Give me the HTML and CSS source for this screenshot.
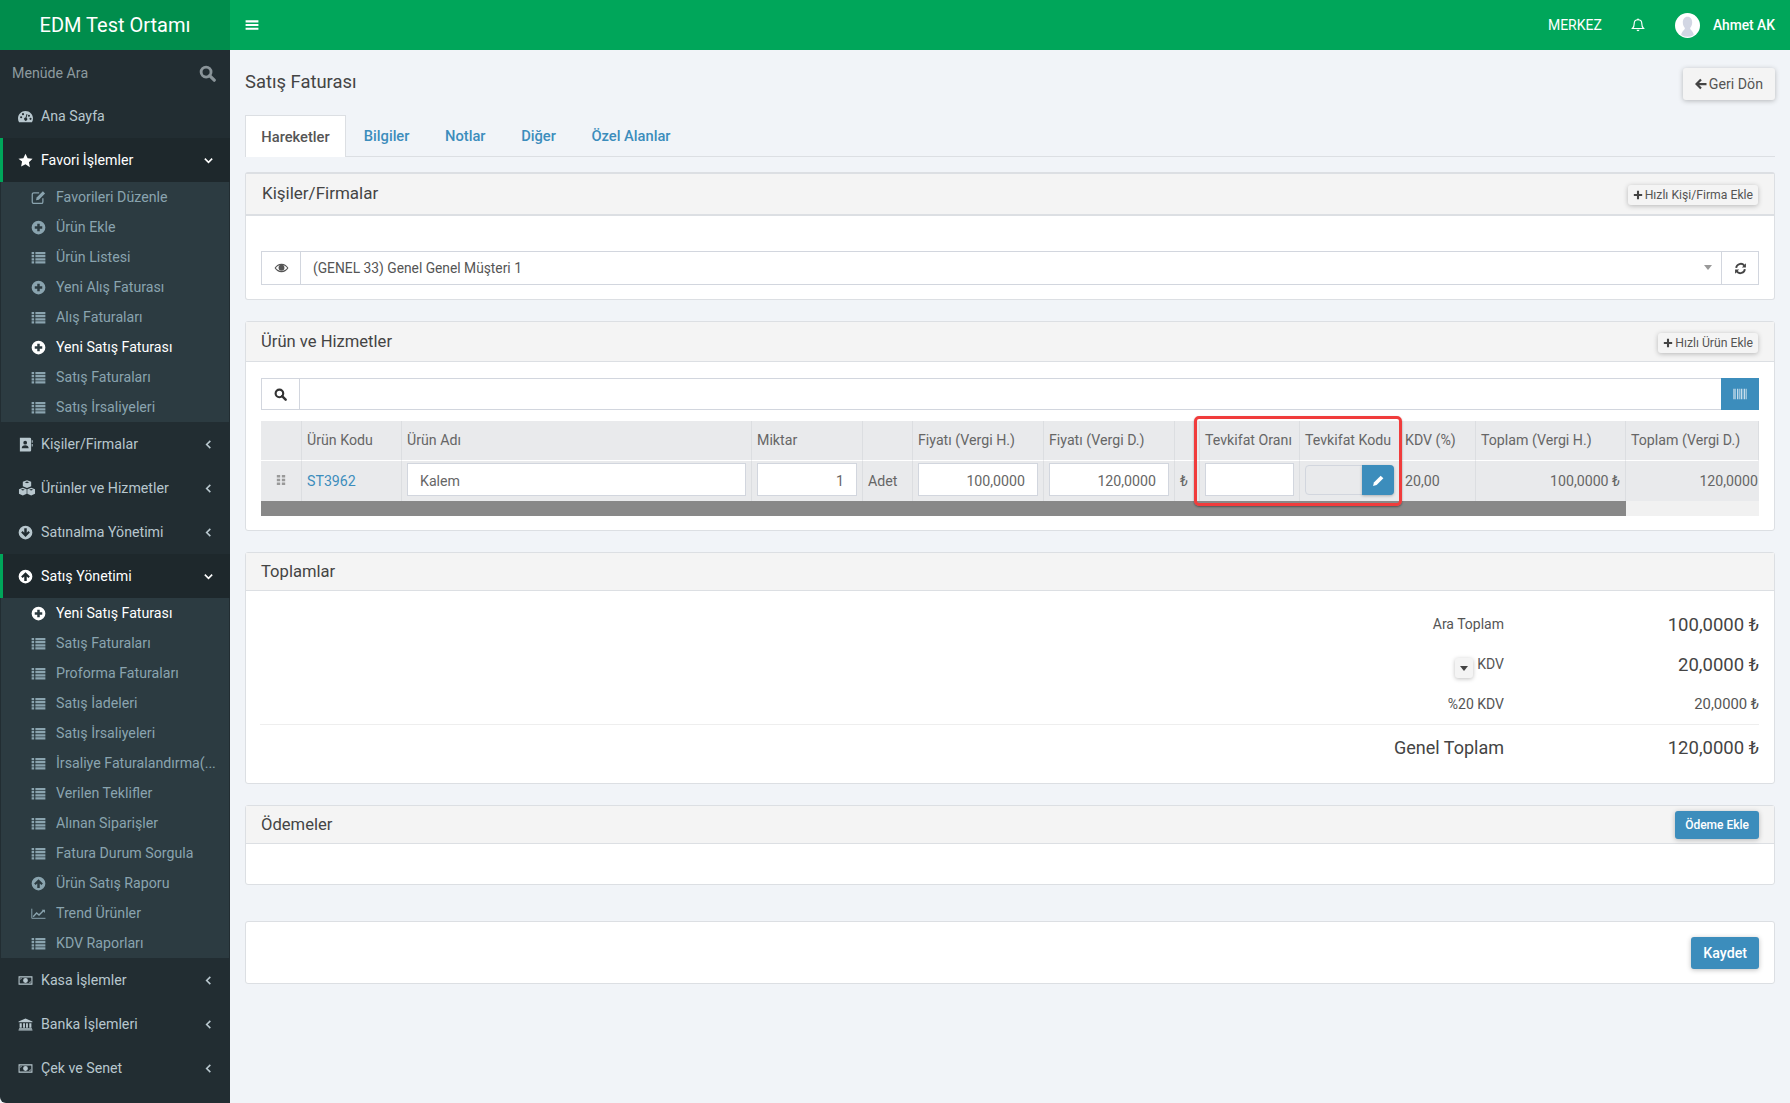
FILE: index.html
```html
<!DOCTYPE html>
<html lang="tr">
<head>
<meta charset="utf-8">
<title>EDM Test Ortamı</title>
<link rel="stylesheet" href="styles.css">
</head>
<body>
<svg class="defs" width="0" height="0">
	<symbol id="i-search" viewBox="0 0 24 24"><circle cx="10" cy="10" r="7" fill="none" stroke="currentColor" stroke-width="4"/><path d="M15 15l6.500 6.500" stroke="currentColor" stroke-width="4.500" stroke-linecap="round"/></symbol>
	<symbol id="i-bars" viewBox="0 0 24 24"><path d="M1 4h22v3.500H1zM1 10.300h22v3.500H1zM1 16.600h22v3.500H1z" fill="currentColor"/></symbol>
	<symbol id="i-dash" viewBox="0 0 24 24"><path fill-rule="evenodd" fill="currentColor" d="M12 3C5.400 3 0 8.400 0 15c0 2.300.6 4.200 1.700 6h20.600C23.400 19.200 24 17.300 24 15c0-6.600-5.400-12-12-12zM5 11.500a1.700 1.700 0 1 1 0 3.400a1.700 1.700 0 0 1 0-3.400zM8 6.500a1.700 1.700 0 1 1 0 3.400a1.700 1.700 0 0 1 0-3.400zM13.700 8l1.400.5L13.600 14a2.500 2.500 0 1 1-1.500-.3zM17.500 9a1.700 1.700 0 1 1 0 3.400a1.700 1.700 0 0 1 0-3.400zM20 14a1.700 1.700 0 1 1 0 3.400a1.700 1.700 0 0 1 0-3.400z"/></symbol>
	<symbol id="i-star" viewBox="0 0 24 24"><path fill="currentColor" d="M12 1l3.400 7.300 7.900 1-5.800 5.400 1.500 7.900L12 17.800l-7 3.800 1.500-7.900L.7 9.300l7.900-1z"/></symbol>
	<symbol id="i-down" viewBox="0 0 24 24"><path d="M4 8l8 8 8-8" fill="none" stroke="currentColor" stroke-width="3.500"/></symbol>
	<symbol id="i-left" viewBox="0 0 24 24"><path d="M16 4l-8 8 8 8" fill="none" stroke="currentColor" stroke-width="3.500"/></symbol>
	<symbol id="i-edit" viewBox="0 0 24 24"><path d="M19 13v6a2.500 2.500 0 0 1-2.500 2.500h-12A2.500 2.500 0 0 1 2 19V7a2.500 2.500 0 0 1 2.500-2.500H13" fill="none" stroke="currentColor" stroke-width="2"/><path d="M9 12L19 2l3.500 3.500-10 10L8 16.500z" fill="currentColor"/></symbol>
	<symbol id="i-plus-c" viewBox="0 0 24 24"><path fill-rule="evenodd" fill="currentColor" d="M12 1a11 11 0 1 0 0 22a11 11 0 0 0 0-22zM10 6h4v4h4v4h-4v4h-4v-4H6v-4h4z"/></symbol>
	<symbol id="i-up-c" viewBox="0 0 24 24"><path fill-rule="evenodd" fill="currentColor" d="M12 1a11 11 0 1 0 0 22a11 11 0 0 0 0-22zM12 5l7 7-2.400 2.400-2.600-2.600V19h-4v-7.200l-2.600 2.600L5 12z"/></symbol>
	<symbol id="i-down-c" viewBox="0 0 24 24"><path fill-rule="evenodd" fill="currentColor" d="M12 1a11 11 0 1 0 0 22a11 11 0 0 0 0-22zM12 19l-7-7 2.400-2.400L10 12.200V5h4v7.200l2.600-2.600L19 12z"/></symbol>
	<symbol id="i-list" viewBox="0 0 24 24"><path fill="currentColor" d="M1 3h4v3.600H1zM7 3h16v3.600H7zM1 8h4v3.600H1zM7 8h16v3.600H7zM1 13h4v3.600H1zM7 13h16v3.600H7zM1 18h4v3.600H1zM7 18h16v3.600H7z"/></symbol>
	<symbol id="i-book" viewBox="0 0 24 24"><path fill-rule="evenodd" fill="currentColor" d="M3 1h16a2 2 0 0 1 2 2v18a2 2 0 0 1-2 2H3zM11.500 6a3 3 0 1 0 0 6a3 3 0 0 0 0-6zM6 18h11c0-3-2-5-5.500-5S6 15 6 18z"/><path fill="currentColor" d="M22 5h1.500v4H22zM22 11h1.500v4H22z"/></symbol>
	<symbol id="i-cubes" viewBox="0 0 28 24"><path fill-rule="evenodd" fill="currentColor" d="M14 0l6.500 2.400v7L14 12l-6.500-2.600v-7zM14 2l-3.500 1.200L14 4.500l3.500-1.300zM7.500 11.500l6 2.300v7l-6 2.700-6-2.700v-7zM7.500 13.500L4.500 14.600l3 1.100 3-1.100zM20.500 11.500l6 2.300v7l-6 2.700-6-2.700v-7zM20.500 13.500l-3 1.100 3 1.100 3-1.100z"/></symbol>
	<symbol id="i-chart" viewBox="0 0 28 24"><path d="M1.500 3v18H27" fill="none" stroke="currentColor" stroke-width="1.800"/><path d="M4 18l6.500-7 4.500 4 8-8" fill="none" stroke="currentColor" stroke-width="2.600"/><path d="M20 5h6v6z" fill="currentColor"/></symbol>
	<symbol id="i-money" viewBox="0 0 28 24"><path fill-rule="evenodd" fill="currentColor" d="M1 4h26v16H1zM3 6.500v11h22v-11zM14 7.500a4.500 4.500 0 1 0 0 9a4.500 4.500 0 0 0 0-9z"/><path fill="currentColor" d="M4.500 8h3l-3 3zM23.500 16h-3l3-3z"/></symbol>
	<symbol id="i-bank" viewBox="0 0 28 24"><path fill="currentColor" d="M14 1l13 5.500V8H1V6.500zM3 9.500h4V18H3zM9.500 9.500h3.500V18H9.500zM15 9.500h3.500V18H15zM21 9.500h4V18h-4zM2 19h24v1.800H2zM1 21.500h26V23H1z"/></symbol>
	<symbol id="i-bell" viewBox="0 0 24 24"><path d="M12 3c-4 0-6.500 3-6.500 6.500 0 5-1.500 7-3 8.500h19c-1.500-1.500-3-3.500-3-8.500C18.500 6 16 3 12 3z" fill="none" stroke="currentColor" stroke-width="2"/><path d="M9.500 20a2.500 2.500 0 0 0 5 0z" fill="currentColor"/><circle cx="12" cy="2.200" r="1.500" fill="currentColor"/></symbol>
	<symbol id="i-back" viewBox="0 0 24 24"><path d="M12 3L3 12l9 9M4 12h19" fill="none" stroke="currentColor" stroke-width="4.500"/></symbol>
	<symbol id="i-plus" viewBox="0 0 24 24"><path d="M9.500 2h5v7.500H22v5h-7.500V22h-5v-7.500H2v-5h7.500z" fill="currentColor"/></symbol>
	<symbol id="i-eye" viewBox="0 0 28 24"><path fill-rule="evenodd" fill="currentColor" d="M14 4C8 4 3.500 8 1 12c2.500 4 7 8 13 8s10.500-4 13-8c-2.500-4-7-8-13-8zM14 6.500C18 6.500 22.500 9 24.500 12c-2 3-6.500 5.500-10.500 5.500S5.500 15 3.500 12C5.500 9 10 6.500 14 6.500z"/><circle cx="14" cy="11.500" r="5.500" fill="currentColor"/></symbol>
	<symbol id="i-refresh" viewBox="0 0 24 24"><path d="M4 11a8.500 8.500 0 0 1 15-4.500M20 13a8.500 8.500 0 0 1-15 4.500" fill="none" stroke="currentColor" stroke-width="3.500"/><path d="M22 2.500V10h-7.500zM2 21.500V14h7.500z" fill="currentColor"/></symbol>
	<symbol id="i-pencil" viewBox="0 0 24 24"><path d="M2 22l1.500-6.500L16 3l5 5L8.500 20.500z" fill="currentColor"/></symbol>
	<symbol id="i-barcode" viewBox="0 0 24 24"><path fill="currentColor" opacity=".9" d="M2 4h2v16H2zM5 4h1v16H5zM7.500 4h2v16h-2zM11 4h1v16h-1zM13 4h2v16h-2zM16 4h1v16h-1zM18 4h1.500v16H18zM20.500 4H22v16h-1.500z"/></symbol>
	<symbol id="i-grip" viewBox="0 0 12 14"><path fill="currentColor" d="M1 1h4v3H1zM7 1h4v3H7zM1 5.500h4v3H1zM7 5.500h4v3H7zM1 10h4v3H1zM7 10h4v3H7z"/></symbol>
</svg>

<aside class="sidebar">
	<div class="logo">EDM Test Ortamı</div>
	<div class="menu-search"><span>Menüde Ara</span><svg class="ic-search"><use href="#i-search"/></svg></div>

	<a class="menu-item"><svg class="mi"><use href="#i-dash"/></svg>Ana Sayfa</a>

	<a class="menu-item open"><svg class="mi"><use href="#i-star"/></svg>Favori İşlemler<svg class="arrow"><use href="#i-down"/></svg></a>
	<div class="submenu">
		<a><svg class="si"><use href="#i-edit"/></svg>Favorileri Düzenle</a>
		<a><svg class="si"><use href="#i-plus-c"/></svg>Ürün Ekle</a>
		<a><svg class="si"><use href="#i-list"/></svg>Ürün Listesi</a>
		<a><svg class="si"><use href="#i-plus-c"/></svg>Yeni Alış Faturası</a>
		<a><svg class="si"><use href="#i-list"/></svg>Alış Faturaları</a>
		<a class="current"><svg class="si"><use href="#i-plus-c"/></svg>Yeni Satış Faturası</a>
		<a><svg class="si"><use href="#i-list"/></svg>Satış Faturaları</a>
		<a><svg class="si"><use href="#i-list"/></svg>Satış İrsaliyeleri</a>
	</div>

	<a class="menu-item"><svg class="mi"><use href="#i-book"/></svg>Kişiler/Firmalar<svg class="arrow"><use href="#i-left"/></svg></a>
	<a class="menu-item"><svg class="mi wide"><use href="#i-cubes"/></svg>Ürünler ve Hizmetler<svg class="arrow"><use href="#i-left"/></svg></a>
	<a class="menu-item"><svg class="mi"><use href="#i-down-c"/></svg>Satınalma Yönetimi<svg class="arrow"><use href="#i-left"/></svg></a>

	<a class="menu-item open"><svg class="mi"><use href="#i-up-c"/></svg>Satış Yönetimi<svg class="arrow"><use href="#i-down"/></svg></a>
	<div class="submenu">
		<a class="current"><svg class="si"><use href="#i-plus-c"/></svg>Yeni Satış Faturası</a>
		<a><svg class="si"><use href="#i-list"/></svg>Satış Faturaları</a>
		<a><svg class="si"><use href="#i-list"/></svg>Proforma Faturaları</a>
		<a><svg class="si"><use href="#i-list"/></svg>Satış İadeleri</a>
		<a><svg class="si"><use href="#i-list"/></svg>Satış İrsaliyeleri</a>
		<a><svg class="si"><use href="#i-list"/></svg>İrsaliye Faturalandırma(...</a>
		<a><svg class="si"><use href="#i-list"/></svg>Verilen Teklifler</a>
		<a><svg class="si"><use href="#i-list"/></svg>Alınan Siparişler</a>
		<a><svg class="si"><use href="#i-list"/></svg>Fatura Durum Sorgula</a>
		<a><svg class="si"><use href="#i-up-c"/></svg>Ürün Satış Raporu</a>
		<a><svg class="si"><use href="#i-chart"/></svg>Trend Ürünler</a>
		<a><svg class="si"><use href="#i-list"/></svg>KDV Raporları</a>
	</div>

	<a class="menu-item"><svg class="mi"><use href="#i-money"/></svg>Kasa İşlemler<svg class="arrow"><use href="#i-left"/></svg></a>
	<a class="menu-item"><svg class="mi"><use href="#i-bank"/></svg>Banka İşlemleri<svg class="arrow"><use href="#i-left"/></svg></a>
	<a class="menu-item"><svg class="mi"><use href="#i-money"/></svg>Çek ve Senet<svg class="arrow"><use href="#i-left"/></svg></a>
</aside>

<div class="main">
	<header class="topbar">
		<svg class="ic-bars"><use href="#i-bars"/></svg>
		<div class="topbar-right">
			<span>MERKEZ</span>
			<svg class="ic-bell"><use href="#i-bell"/></svg>
			<span class="avatar"><svg viewBox="0 0 24 24"><circle cx="12" cy="12" r="12" fill="#fff"/><path d="M12 3.500c-3 0-4.500 2.500-4.500 5.500 0 2.500 1 4 2 5.500 0 2-3 3-3.500 6.500a11.500 11.500 0 0 0 12 0c-.5-3.500-3.500-4.500-3.500-6.500 1-1.500 2-3 2-5.500 0-3-1.500-5.500-4.500-5.500z" fill="#d2d6e3"/></svg></span>
			<span class="username">Ahmet AK</span>
		</div>
	</header>

	<div class="content">
		<div class="page-head">
			<h1>Satış Faturası</h1>
			<a class="btn btn-back"><svg><use href="#i-back"/></svg>Geri Dön</a>
		</div>

		<ul class="tabs">
			<li class="active">Hareketler</li>
			<li>Bilgiler</li>
			<li>Notlar</li>
			<li>Diğer</li>
			<li>Özel Alanlar</li>
		</ul>

		<section class="box box-customer">
			<div class="box-head">
				<h3>Kişiler/Firmalar</h3>
				<a class="btn btn-xs"><svg><use href="#i-plus"/></svg>Hızlı Kişi/Firma Ekle</a>
			</div>
			<div class="customer-body">
				<div class="group">
					<span class="addon addon-eye"><svg><use href="#i-eye"/></svg></span>
					<span class="group-field">(GENEL 33) Genel Genel Müşteri 1<i class="caret"></i></span>
					<span class="addon addon-refresh"><svg><use href="#i-refresh"/></svg></span>
				</div>
			</div>
		</section>

		<section class="box">
			<div class="box-head box-head-products">
				<h3>Ürün ve Hizmetler</h3>
				<a class="btn btn-xs"><svg><use href="#i-plus"/></svg>Hızlı Ürün Ekle</a>
			</div>
			<div class="products-body">
				<div class="group group-search">
					<span class="addon addon-search"><svg><use href="#i-search"/></svg></span>
					<span class="group-field"></span>
					<span class="addon-barcode"><svg><use href="#i-barcode"/></svg></span>
				</div>
				<div class="table-area">
					<div class="table-wrap">
						<table class="lines">
							<colgroup>
								<col class="c41"><col class="c100"><col class="c350"><col class="c111"><col class="c50"><col class="c131"><col class="c131"><col class="c25"><col class="c100"><col class="c100"><col class="c76"><col class="c150"><col class="c133">
							</colgroup>
							<thead>
								<tr>
									<th></th><th>Ürün Kodu</th><th>Ürün Adı</th><th>Miktar</th><th></th><th>Fiyatı (Vergi H.)</th><th>Fiyatı (Vergi D.)</th><th></th><th>Tevkifat Oranı</th><th>Tevkifat Kodu</th><th>KDV (%)</th><th>Toplam (Vergi H.)</th><th>Toplam (Vergi D.)</th>
								</tr>
							</thead>
							<tbody>
								<tr>
									<td class="grip"><svg><use href="#i-grip"/></svg></td>
									<td><a class="code">ST3962</a></td>
									<td><span class="cell-input">Kalem</span></td>
									<td><span class="cell-input right">1</span></td>
									<td>Adet</td>
									<td><span class="cell-input right">100,0000</span></td>
									<td><span class="cell-input right">120,0000</span></td>
									<td>₺</td>
									<td><span class="cell-input"></span></td>
									<td><span class="code-pick"><span></span><b><svg><use href="#i-pencil"/></svg></b></span></td>
									<td>20,00</td>
									<td class="num">100,0000 ₺</td>
									<td class="num last">120,0000</td>
								</tr>
							</tbody>
						</table>
						<div class="scrollbar"><div class="thumb"></div></div>
					</div>
					<div class="highlight"></div>
				</div>
			</div>
		</section>

		<section class="box">
			<div class="box-head box-head-plain"><h3>Toplamlar</h3></div>
			<div class="totals">
				<div class="total-row total-large"><span class="t-label">Ara Toplam</span><span class="t-value">100,0000 ₺</span></div>
				<div class="total-row total-large"><span class="t-label"><a class="caret-btn"><i class="caret dark"></i></a>KDV</span><span class="t-value">20,0000 ₺</span></div>
				<div class="total-row total-small"><span class="t-label">%20 KDV</span><span class="t-value">20,0000 ₺</span></div>
				<div class="total-row total-grand"><span class="t-label">Genel Toplam</span><span class="t-value">120,0000 ₺</span></div>
			</div>
		</section>

		<section class="box box-payments">
			<div class="box-head box-head-plain">
				<h3>Ödemeler</h3>
				<a class="btn btn-primary btn-sm">Ödeme Ekle</a>
			</div>
			<div class="payments-body"></div>
		</section>

		<section class="box save-bar">
			<a class="btn btn-primary btn-save">Kaydet</a>
		</section>
	</div>
</div>
</body>
</html>
```

FILE: styles.css
```css
* {
	box-sizing: border-box;
}

html, body {
	height: 100%;
}

body {
	margin: 0;
	display: flex;
	min-height: 1103px;
	overflow: hidden;
	background: #f1f4f8;
	color: #555;
	font-family: Roboto, "Liberation Sans", sans-serif;
	font-size: 14.2px;
}

.defs {
	position: absolute;
}

/* sidebar */
.sidebar {
	width: 230px;
	flex: none;
	background: #222d32;
	color: #b8c7ce;
	border-bottom-left-radius: 6px;
}

.logo {
	height: 50px;
	line-height: 51px;
	background: #008d4c;
	color: #fff;
	text-align: center;
	font-size: 20px;
}

.menu-search {
	height: 44px;
	display: flex;
	align-items: center;
	justify-content: space-between;
	padding: 2px 14px 0 12px;
	color: #8d9a9f;
}

.ic-search {
	width: 17px;
	height: 17px;
	color: #8a9499;
}

.menu-item {
	height: 44px;
	display: flex;
	align-items: center;
	padding-left: 18px;
}

.menu-item.open {
	background: #1e282c;
	border-left: 3px solid #00a65a;
	padding-left: 15px;
	color: #fff;
}

.mi {
	width: 15px;
	height: 15px;
	margin-right: 8px;
	flex: none;
	overflow: visible;
}

.mi.wide {
	width: 18px;
	height: 16px;
	margin-right: 5px;
}

.arrow {
	width: 11px;
	height: 11px;
	margin-left: auto;
	margin-right: 16px;
}

.submenu {
	background: #2c3b41;
	margin: 0 1px;
}

.submenu a {
	height: 30px;
	display: flex;
	align-items: center;
	padding-left: 30px;
	color: #8aa4af;
	white-space: nowrap;
}

.submenu a.current {
	color: #fff;
}

.si {
	width: 15px;
	height: 15px;
	margin-right: 10px;
	flex: none;
}

/* top */
.main {
	flex: 1;
	min-width: 0;
}

.topbar {
	height: 50px;
	background: #00a65a;
	color: #fff;
	display: flex;
	align-items: center;
	justify-content: space-between;
	padding: 0 15px;
	font-size: 14px;
}

.ic-bars {
	width: 14px;
	height: 14px;
}

.topbar-right {
	display: flex;
	align-items: center;
}

.ic-bell {
	width: 14px;
	height: 14px;
	margin: 0 30px 0 29px;
}

.avatar {
	width: 25px;
	height: 25px;
	margin-right: 13px;
}

.avatar svg {
	display: block;
	width: 25px;
	height: 25px;
}

.username {
	font-size: 13.800px;
	font-weight: 500;
}

.content {
	padding: 18px 15px 0;
}

.page-head {
	height: 47px;
	display: flex;
	justify-content: space-between;
	align-items: flex-start;
}

h1 {
	margin: 3px 0 0;
	font-size: 18.400px;
	line-height: 22px;
	font-weight: 400;
	color: #444;
}

.btn {
	display: inline-flex;
	align-items: center;
	background: #f4f4f4;
	border-radius: 3px;
	box-shadow: 0 1px 5px rgba(0, 0, 0, .25);
	color: #555;
	white-space: nowrap;
}

.btn-back {
	height: 32px;
	padding: 0 12px;
}

.btn-back svg {
	width: 12px;
	height: 12px;
	margin-right: 2px;
	color: #444;
}

/* tabs */
.tabs {
	display: flex;
	height: 42px;
	margin: 0 0 15px;
	padding: 0;
	list-style: none;
	border-bottom: 1px solid #dcdfe3;
	font-size: 14.700px;
}

.tabs li {
	height: 41px;
	line-height: 42px;
	padding: 0 17.800px;
	color: #3c8dbc;
	font-weight: 500;
}

.tabs li.active {
	width: 101px;
	height: 42px;
	padding: 0;
	text-align: center;
	background: #fff;
	border: 1px solid #dcdfe3;
	border-bottom: 0;
	color: #555;
}

/* boxes */
.box {
	background: #fff;
	border: 1px solid #dcdfe3;
	border-radius: 3px;
	margin-bottom: 21px;
}

.box-head {
	display: flex;
	align-items: center;
	justify-content: space-between;
	background: #f4f4f4;
	border-bottom: 1px solid #dcdfe3;
	padding: 0 15px 0 15px;
}

.box-head h3 {
	margin: 0;
	font-size: 16.600px;
	font-weight: 400;
	color: #444;
}

.box-customer {
	height: 128px;
	border-top-width: 2px;
}

.box-customer .box-head {
	height: 42px;
	border-bottom-width: 2px;
	padding-left: 16px;
	padding-bottom: 3px;
}

.box-customer h3 {
	font-size: 17px;
}

.box-customer .btn-xs {
	margin-top: 5px;
}

.box-head-products {
	height: 40px;
}

.box-head-products .btn-xs {
	margin-top: 2px;
}

.box-head-plain {
	height: 38px;
}

.btn-xs {
	height: 20px;
	padding: 0 5px;
	font-size: 12.200px;
	margin-right: 1px;
}

.btn-xs svg {
	width: 10px;
	height: 10px;
	margin-right: 2px;
	color: #444;
}

.customer-body {
	padding: 35px 15px 0;
}

.group {
	display: flex;
	height: 34px;
	border: 1px solid #d2d6de;
	background: #fff;
}

.addon {
	display: flex;
	align-items: center;
	justify-content: center;
	flex: none;
}

.addon-eye {
	width: 39px;
	border-right: 1px solid #d2d6de;
}

.addon-eye svg {
	width: 15px;
	height: 14px;
}

.addon-refresh {
	width: 37px;
	border-left: 1px solid #d2d6de;
}

.addon-refresh svg {
	width: 13px;
	height: 13px;
	color: #444;
}

.group-field {
	flex: 1;
	display: flex;
	align-items: center;
	justify-content: space-between;
	padding: 0 12px 1px;
	font-size: 13.800px;
}

.caret {
	width: 0;
	height: 0;
	border-left: 4px solid transparent;
	border-right: 4px solid transparent;
	border-top: 5px solid #999;
	margin-right: -3px;
}

.caret.dark {
	border-top-color: #444;
	margin: 0;
}

/* product lines */
.products-body {
	padding: 16px 15px 14px 15px;
}

.group-search {
	height: 32px;
}

.addon-search {
	width: 38px;
	border-right: 1px solid #d2d6de;
}

.addon-search svg {
	width: 13px;
	height: 13px;
	color: #333;
}

.addon-barcode {
	width: 38px;
	margin: -1px -1px -1px 0;
	flex: none;
	display: flex;
	align-items: center;
	justify-content: center;
	background: #3c8dbc;
	color: #d5e6f1;
}

.addon-barcode svg {
	width: 16px;
	height: 16px;
}

.table-area {
	position: relative;
	margin-top: 11px;
}

.table-wrap {
	overflow: hidden;
}

.lines {
	table-layout: fixed;
	width: 1498px;
	border-collapse: separate;
	border-spacing: 0;
	color: #666;
}

.c41 { width: 41px; }
.c100 { width: 100px; }
.c350 { width: 350px; }
.c111 { width: 111px; }
.c50 { width: 50px; }
.c131 { width: 131px; }
.c25 { width: 25px; }
.c76 { width: 76px; }
.c150 { width: 150px; }
.c133 { width: 133px; }

.lines th,
.lines td {
	background: #e9eaec;
	border-right: 1px solid #dcdee1;
	padding: 0 5px;
	text-align: left;
	white-space: nowrap;
	overflow: hidden;
}

.lines th {
	height: 40px;
	padding-bottom: 2px;
	font-weight: 400;
	border-bottom: 1px solid #fff;
}

.lines td {
	height: 40px;
}

.lines td.num {
	text-align: right;
}

.lines td.last {
	padding-right: 1px;
	border-right: 0;
}

.grip {
	text-align: center !important;
	color: #999;
}

.grip svg {
	width: 10px;
	height: 12px;
}

.code {
	color: #3c8dbc;
}

.cell-input {
	display: block;
	height: 33px;
	line-height: 34px;
	background: #fff;
	border: 1px solid #d2d6de;
	padding: 0 12px;
	margin-top: -3px;
}

.cell-input.right {
	text-align: right;
}

.code-pick {
	display: flex;
	height: 30px;
	border: 1px solid #d2d6de;
	border-radius: 4px;
	margin: -2px 0 0 0;
}

.code-pick span {
	flex: 1;
}

.code-pick b {
	width: 32px;
	margin: -1px;
	display: flex;
	align-items: center;
	justify-content: center;
	background: #3c8dbc;
	border-radius: 0 4px 4px 0;
	box-shadow: 0 1px 3px rgba(0, 0, 0, .25);
	color: #fff;
}

.code-pick svg {
	width: 13px;
	height: 13px;
}

.scrollbar {
	height: 15px;
	background: #f1f1f1;
}

.thumb {
	width: 1365px;
	height: 15px;
	background: #888;
}

/* red frame drawn over the two columns */
.highlight {
	position: absolute;
	left: 933px;
	top: -5px;
	width: 208px;
	height: 90px;
	border: 3px solid #f03c3c;
	border-radius: 5px;
	box-shadow: 0 1px 2px rgba(0, 0, 0, .4);
}

/* totals */
.totals {
	padding: 13px 15px 13px 14px;
}

.total-row {
	display: flex;
	align-items: center;
	height: 40px;
	color: #555;
}

.t-label {
	width: 1244px;
	display: flex;
	justify-content: flex-end;
	align-items: center;
	font-size: 14px;
}

.t-value {
	flex: 1;
	text-align: right;
	font-size: 18.500px;
	color: #444;
}

.total-large .t-value {
	padding-top: 2px;
}

.caret-btn {
	width: 18px;
	height: 20px;
	margin: 8px 4px 0 0;
	display: flex;
	align-items: center;
	justify-content: center;
	background: #f4f4f4;
	border-radius: 3px;
	box-shadow: 0 1px 4px rgba(0, 0, 0, .25);
}

.total-small .t-value {
	font-size: 14.800px;
	color: #555;
}

.total-grand {
	height: 46px;
	border-top: 1px solid #eee;
}

.total-grand .t-label {
	font-size: 18px;
	color: #444;
}

.btn-primary {
	background: #3c8dbc;
	color: #fff;
}

.btn-sm {
	height: 28px;
	padding: 0 10px;
	font-size: 12px;
	font-weight: 500;
}

.box-payments {
	margin-bottom: 36px;
}

.payments-body {
	height: 40px;
}

.save-bar {
	height: 63px;
	display: flex;
	align-items: center;
	justify-content: flex-end;
	padding-right: 15px;
}

.btn-save {
	height: 32px;
	padding: 0 12px;
	font-weight: 500;
}
```
